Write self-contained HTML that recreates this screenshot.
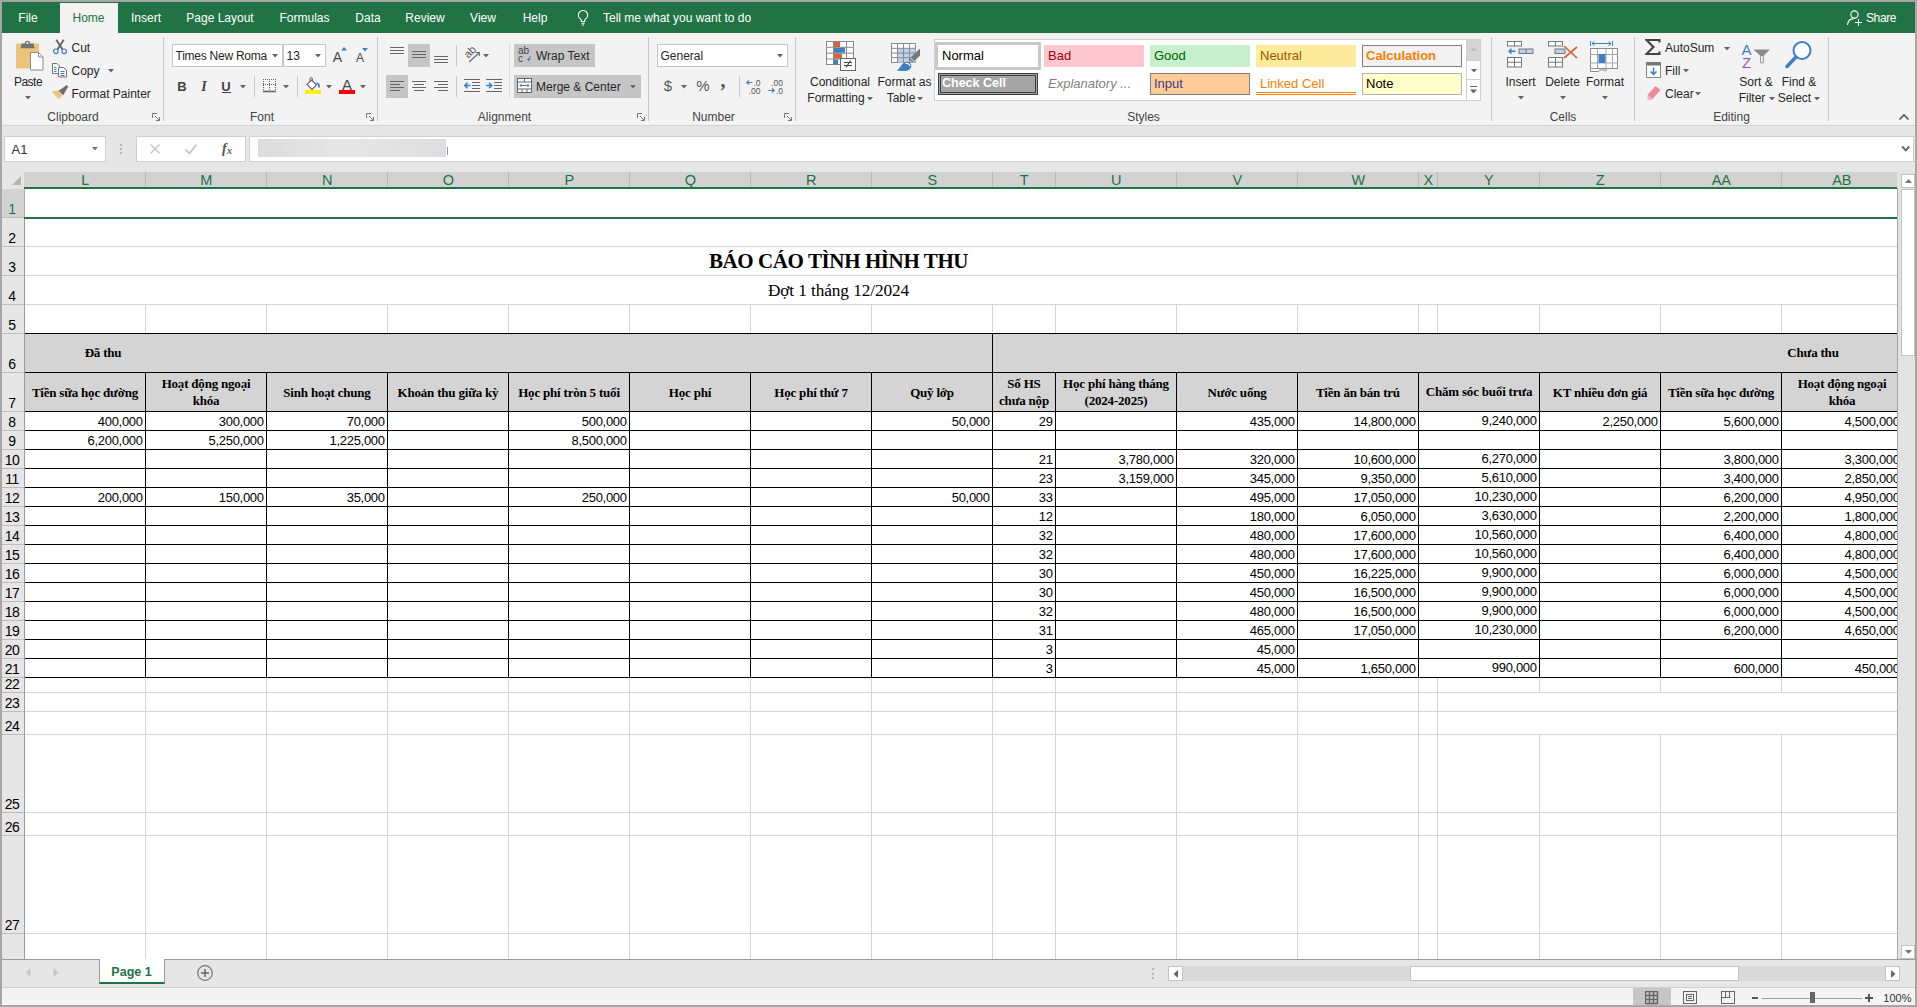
<!DOCTYPE html>
<html><head><meta charset="utf-8"><title>Excel</title>
<style>
html,body{margin:0;padding:0}
body{width:1917px;height:1007px;overflow:hidden;background:#a6a6a6;position:relative;font-family:"Liberation Sans",sans-serif;font-size:12px;color:#262626}
div,span,svg{position:absolute;box-sizing:border-box}
span{white-space:nowrap;line-height:1}
.u{font-size:12px;color:#262626}
.w{font-size:12px;color:#fff}
.gl{font-size:12px;color:#444}
.hd{font-family:"Liberation Serif",serif;font-weight:bold;font-size:13px;letter-spacing:-0.2px;color:#000;text-align:center;white-space:normal;line-height:17px}
.d{font-size:13px;letter-spacing:-0.3px;color:#000}
.rn{font-size:14px;letter-spacing:-0.5px;color:#000}
.cn{font-size:14.5px;color:#217346}
.sep{width:1px;background:#c8c8c8}
</style></head><body>

<div style="left:2px;top:2px;width:1913px;height:31px;background:#217346"></div>
<div style="left:60px;top:3px;width:58px;height:30px;background:#f3f3f3"></div>
<span class="w" style="left:28px;top:17.5px;transform:translate(-50%,-50%);">File</span>
<span class="w" style="left:146px;top:17.5px;transform:translate(-50%,-50%);">Insert</span>
<span class="w" style="left:220px;top:17.5px;transform:translate(-50%,-50%);">Page Layout</span>
<span class="w" style="left:304.5px;top:17.5px;transform:translate(-50%,-50%);">Formulas</span>
<span class="w" style="left:368px;top:17.5px;transform:translate(-50%,-50%);">Data</span>
<span class="w" style="left:425px;top:17.5px;transform:translate(-50%,-50%);">Review</span>
<span class="w" style="left:483px;top:17.5px;transform:translate(-50%,-50%);">View</span>
<span class="w" style="left:535px;top:17.5px;transform:translate(-50%,-50%);">Help</span>
<span class="u" style="left:88.5px;top:17.5px;transform:translate(-50%,-50%);color:#217346">Home</span>
<svg style="left:576px;top:9px" width="14" height="18" viewBox="0 0 14 18"><path d="M7 1.5a4.6 4.6 0 0 0-2.6 8.4c.6.5.9 1.1.9 1.9v.7h3.4v-.7c0-.8.3-1.4.9-1.9A4.6 4.6 0 0 0 7 1.500z" fill="none" stroke="#fff" stroke-width="1.1"/><path d="M5.4 14.3h3.2M5.9 16h2.200" stroke="#fff" stroke-width="1"/></svg>
<span class="w" style="left:603px;top:17.5px;transform:translate(0,-50%);">Tell me what you want to do</span>
<svg style="left:1846px;top:9px" width="18" height="18" viewBox="0 0 18 18"><circle cx="8.5" cy="5.5" r="3.6" fill="none" stroke="#fff" stroke-width="1.1"/><path d="M1.500 16c.4-4 3-6.300 6-6.400" fill="none" stroke="#fff" stroke-width="1.1"/><path d="M12.500 10v7M9 13.500h7" stroke="#fff" stroke-width="1.1"/></svg>
<span class="w" style="left:1866px;top:17.5px;transform:translate(0,-50%);letter-spacing:-0.400px">Share</span>
<div style="left:2px;top:33px;width:1913px;height:92px;background:#f3f3f3"></div>
<div style="left:2px;top:125px;width:1913px;height:1px;background:#d4d4d4"></div>
<div class="sep" style="left:163px;top:37px;width:1px;height:84px;"></div>
<div class="sep" style="left:377px;top:37px;width:1px;height:84px;"></div>
<div class="sep" style="left:648px;top:37px;width:1px;height:84px;"></div>
<div class="sep" style="left:795px;top:37px;width:1px;height:84px;"></div>
<div class="sep" style="left:1491px;top:37px;width:1px;height:84px;"></div>
<div class="sep" style="left:1634px;top:37px;width:1px;height:84px;"></div>
<div class="sep" style="left:1828px;top:37px;width:1px;height:84px;"></div>
<span class="gl" style="left:73px;top:116.5px;transform:translate(-50%,-50%);">Clipboard</span>
<span class="gl" style="left:262px;top:116.5px;transform:translate(-50%,-50%);">Font</span>
<span class="gl" style="left:504.5px;top:116.5px;transform:translate(-50%,-50%);">Alignment</span>
<span class="gl" style="left:713.5px;top:116.5px;transform:translate(-50%,-50%);">Number</span>
<span class="gl" style="left:1143.5px;top:116.5px;transform:translate(-50%,-50%);">Styles</span>
<span class="gl" style="left:1563px;top:116.5px;transform:translate(-50%,-50%);">Cells</span>
<span class="gl" style="left:1731.5px;top:116.5px;transform:translate(-50%,-50%);">Editing</span>
<svg style="left:152px;top:113px" width="8" height="8" viewBox="0 0 8 8"><path d="M.5 5V.500H5" fill="none" stroke="#777" stroke-width="1"/><path d="M3 3l4 4M7.500 4v3.500H4" fill="none" stroke="#777" stroke-width="1"/></svg>
<svg style="left:366px;top:113px" width="8" height="8" viewBox="0 0 8 8"><path d="M.5 5V.500H5" fill="none" stroke="#777" stroke-width="1"/><path d="M3 3l4 4M7.500 4v3.500H4" fill="none" stroke="#777" stroke-width="1"/></svg>
<svg style="left:637px;top:113px" width="8" height="8" viewBox="0 0 8 8"><path d="M.5 5V.500H5" fill="none" stroke="#777" stroke-width="1"/><path d="M3 3l4 4M7.500 4v3.500H4" fill="none" stroke="#777" stroke-width="1"/></svg>
<svg style="left:784px;top:113px" width="8" height="8" viewBox="0 0 8 8"><path d="M.5 5V.500H5" fill="none" stroke="#777" stroke-width="1"/><path d="M3 3l4 4M7.500 4v3.500H4" fill="none" stroke="#777" stroke-width="1"/></svg>
<svg style="left:1898px;top:113px" width="12" height="8" viewBox="0 0 12 8"><path d="M1.500 6.500L6 2l4.500 4.500" fill="none" stroke="#555" stroke-width="1.600"/></svg>
<svg style="left:14px;top:40px" width="32" height="32" viewBox="0 0 32 32"><rect x="2" y="3.500" width="23" height="25" rx="1" fill="#ebc37a"/>
<path d="M7.500 3.500h3.300a2.700 2.700 0 0 1 5.400 0h3.300l1 4.800h-14z" fill="#737373"/><rect x="12.500" y="2.200" width="2" height="1.800" fill="#f3f3f3"/>
<path d="M16.500 12.500h8l4.500 4.500v13h-12.500z" fill="#fff" stroke="#8a8a8a" stroke-width="1"/><path d="M24.500 12.500v4.500h4.500" fill="none" stroke="#8a8a8a" stroke-width="1"/></svg>
<span class="u" style="left:28px;top:82px;transform:translate(-50%,-50%);letter-spacing:-0.500px">Paste</span>
<svg style="left:24.5px;top:95.5px" width="6" height="3.5" viewBox="0 0 6 3.5"><path d="M0 0h6L3 3.500z" fill="#666"/></svg>
<svg style="left:52px;top:39px" width="16" height="16" viewBox="0 0 16 16"><path d="M4.300 .8l6.200 9.700M11.700 .8L5.500 10.500" stroke="#666" stroke-width="1.900" fill="none"/>
<circle cx="3.800" cy="12.300" r="2.300" fill="none" stroke="#3e7fc4" stroke-width="1.200"/><circle cx="12.200" cy="12.300" r="2.300" fill="none" stroke="#3e7fc4" stroke-width="1.200"/></svg>
<span class="u" style="left:71.5px;top:47.5px;transform:translate(0,-50%);">Cut</span>
<svg style="left:51px;top:62px" width="17" height="16" viewBox="0 0 17 16"><path d="M1.500 1.500h4.500l2.500 2.500v7.500h-7z" fill="#fff" stroke="#777" stroke-width="1"/><path d="M3 5.500h2.500M3 7.500h2.500M3 9.500h2.500" stroke="#3e7fc4" stroke-width="1"/>
<path d="M7.500 5.500h5l3 3v6.500h-8z" fill="#fff" stroke="#777" stroke-width="1"/><path d="M9.500 9.500h4M9.500 11.500h4M9.500 13.500h4" stroke="#3e7fc4" stroke-width="1"/></svg>
<span class="u" style="left:71.5px;top:70.5px;transform:translate(0,-50%);">Copy</span>
<svg style="left:108px;top:69.0px" width="6" height="3.5" viewBox="0 0 6 3.5"><path d="M0 0h6L3 3.500z" fill="#666"/></svg>
<svg style="left:51px;top:85px" width="18" height="16" viewBox="0 0 18 16"><path d="M7.500 5.800L13.800 1.500 15.300 0l2 1.800-1.300 1.700-3.700 6.700z" fill="#6d6d6d"/>
<path d="M.8 6.800l6.300-1.700 4.200 5.400-3.500 3.800z" fill="#ebc37a"/></svg>
<span class="u" style="left:71.5px;top:93.5px;transform:translate(0,-50%);">Format Painter</span>
<div style="left:172px;top:44px;width:111px;height:23px;background:#fff;border:1px solid #c6c6c6"></div>
<div style="left:283px;top:44px;width:43px;height:23px;background:#fff;border:1px solid #c6c6c6;border-left:0"></div>
<div style="left:282px;top:45px;width:2px;height:21px;background:#c6c6c6"></div>
<span class="u" style="left:175.5px;top:55.5px;transform:translate(0,-50%);letter-spacing:-0.250px">Times New Roma</span>
<svg style="left:272px;top:54.0px" width="6" height="3.5" viewBox="0 0 6 3.5"><path d="M0 0h6L3 3.500z" fill="#666"/></svg>
<span class="u" style="left:286.5px;top:55.5px;transform:translate(0,-50%);">13</span>
<svg style="left:315px;top:54.0px" width="6" height="3.5" viewBox="0 0 6 3.5"><path d="M0 0h6L3 3.500z" fill="#666"/></svg>
<span class="u" style="left:337.5px;top:57px;transform:translate(-50%,-50%);font-size:14px;color:#484848">A</span>
<svg style="left:341px;top:47px" width="6" height="4" viewBox="0 0 6 4"><path d="M0 3.500L3 0l3 3.500z" fill="#3e7fc4"/></svg>
<span class="u" style="left:360px;top:58px;transform:translate(-50%,-50%);font-size:12px;color:#484848">A</span>
<svg style="left:362px;top:48px" width="6" height="4" viewBox="0 0 6 4"><path d="M0 0h6L3 3.500z" fill="#3e7fc4"/></svg>
<span class="u" style="left:182px;top:86px;transform:translate(-50%,-50%);font-weight:bold;font-size:13px;color:#444">B</span>
<span class="u" style="left:204px;top:86.5px;transform:translate(-50%,-50%);font-style:italic;font-family:&quot;Liberation Serif&quot;,serif;font-weight:bold;font-size:14px;color:#444">I</span>
<span class="u" style="left:226px;top:85.5px;transform:translate(-50%,-50%);font-size:13px;color:#444;font-weight:bold">U</span>
<div style="left:221.5px;top:92px;width:9px;height:1px;background:#444"></div>
<svg style="left:240px;top:85.0px" width="6" height="3.5" viewBox="0 0 6 3.5"><path d="M0 0h6L3 3.500z" fill="#666"/></svg>
<div class="sep" style="left:254px;top:76px;width:1px;height:21px;"></div>
<svg style="left:263px;top:79px" width="14" height="14" viewBox="0 0 14 14"><path d="M0 .5h13M0 5.500h13M.5 0v11M6.500 0v11M12.500 0v11" fill="none" stroke="#666" stroke-width="1" stroke-dasharray="1 1"/><path d="M0 12.500h13" stroke="#666" stroke-width="1.600"/></svg>
<svg style="left:283px;top:85.0px" width="6" height="3.5" viewBox="0 0 6 3.5"><path d="M0 0h6L3 3.500z" fill="#666"/></svg>
<div class="sep" style="left:297px;top:76px;width:1px;height:21px;"></div>
<svg style="left:304px;top:77px" width="18" height="14" viewBox="0 0 18 14"><path d="M7.500 3L12.500 8 8 12.500 3 7.500z" fill="#fff" stroke="#666" stroke-width="1.100"/><path d="M6 4.500V1.800a1.200 1.200 0 0 1 2.400 0V4" fill="none" stroke="#666" stroke-width="1"/>
<path d="M12.500 6c2 .5 3 2 2.300 4.500" fill="none" stroke="#3e7fc4" stroke-width="1.800"/></svg>
<div style="left:305px;top:90px;width:16px;height:4px;background:#ffef00"></div>
<svg style="left:326px;top:85.0px" width="6" height="3.5" viewBox="0 0 6 3.5"><path d="M0 0h6L3 3.500z" fill="#666"/></svg>
<span class="u" style="left:347px;top:83.5px;transform:translate(-50%,-50%);font-size:15px;color:#484848">A</span>
<div style="left:339px;top:90px;width:16px;height:4px;background:#f00"></div>
<svg style="left:360px;top:85.0px" width="6" height="3.5" viewBox="0 0 6 3.5"><path d="M0 0h6L3 3.500z" fill="#666"/></svg>
<svg style="left:390px;top:47px" width="14" height="9" viewBox="0 0 14 9"><rect x="0" y="0" width="14" height="1" fill="#666"/><rect x="0" y="3" width="14" height="1" fill="#666"/><rect x="0" y="6" width="14" height="1" fill="#666"/></svg>
<div style="left:408px;top:44px;width:22px;height:23px;background:#c6c6c6"></div>
<svg style="left:412px;top:51px" width="14" height="9" viewBox="0 0 14 9"><rect x="0" y="0" width="14" height="1" fill="#666"/><rect x="0" y="3" width="14" height="1" fill="#666"/><rect x="0" y="6" width="14" height="1" fill="#666"/></svg>
<svg style="left:434px;top:56px" width="14" height="9" viewBox="0 0 14 9"><rect x="0" y="0" width="14" height="1" fill="#666"/><rect x="0" y="3" width="14" height="1" fill="#666"/><rect x="0" y="6" width="14" height="1" fill="#666"/></svg>
<div class="sep" style="left:456px;top:45px;width:1px;height:21px;"></div>
<svg style="left:463px;top:46px" width="19" height="18" viewBox="0 0 19 18"><path d="M6 16L16 7" stroke="#666" stroke-width="1.100"/><path d="M12.500 6.500l3.800 0 0 3.800" fill="none" stroke="#666" stroke-width="1.100"/></svg>
<span class="u" style="left:469.5px;top:52px;transform:translate(-50%,-50%);font-size:11px;color:#555;transform:translate(-50%,-50%) rotate(-45deg)">ab</span>
<svg style="left:483px;top:54.0px" width="6" height="3.5" viewBox="0 0 6 3.5"><path d="M0 0h6L3 3.500z" fill="#666"/></svg>
<div style="left:509px;top:43px;width:1px;height:55px;background:#dedede"></div>
<div style="left:514px;top:44px;width:81px;height:23px;background:#c6c6c6"></div>
<svg style="left:517px;top:47px" width="15" height="16" viewBox="0 0 15 16"><path d="M10.500 12.500h2.500V9M10.500 12.500l1.500-1.500M10.500 12.500l1.500 1.500" fill="none" stroke="#3e7fc4" stroke-width="1"/></svg>
<span class="u" style="left:518px;top:50.5px;transform:translate(0,-50%);font-size:10px;color:#444">ab</span>
<span class="u" style="left:518px;top:59px;transform:translate(0,-50%);font-size:10px;color:#444">c</span>
<span class="u" style="left:536px;top:55.5px;transform:translate(0,-50%);">Wrap Text</span>
<div style="left:386px;top:75px;width:22px;height:23px;background:#c6c6c6"></div>
<svg style="left:390px;top:81px" width="14" height="12" viewBox="0 0 14 12"><rect x="0" y="0" width="14" height="1" fill="#666"/><rect x="0" y="3" width="10" height="1" fill="#666"/><rect x="0" y="6" width="14" height="1" fill="#666"/><rect x="0" y="9" width="10" height="1" fill="#666"/></svg>
<svg style="left:412px;top:81px" width="14" height="12" viewBox="0 0 14 12"><rect x="0.0" y="0" width="14" height="1" fill="#666"/><rect x="2.0" y="3" width="10" height="1" fill="#666"/><rect x="0.0" y="6" width="14" height="1" fill="#666"/><rect x="2.0" y="9" width="10" height="1" fill="#666"/></svg>
<svg style="left:434px;top:81px" width="14" height="12" viewBox="0 0 14 12"><rect x="0" y="0" width="14" height="1" fill="#666"/><rect x="4" y="3" width="10" height="1" fill="#666"/><rect x="0" y="6" width="14" height="1" fill="#666"/><rect x="4" y="9" width="10" height="1" fill="#666"/></svg>
<div class="sep" style="left:456px;top:76px;width:1px;height:21px;"></div>
<svg style="left:464px;top:79px" width="16" height="14" viewBox="0 0 16 14"><path d="M0 .5h16M8 3.500h8M8 6.500h8M8 9.500h8M0 12.500h16" stroke="#666" stroke-width="1"/><path d="M6.500 6.500H.8M3.500 3.800L.8 6.500l2.700 2.700" fill="none" stroke="#3e7fc4" stroke-width="1.600"/></svg>
<svg style="left:486px;top:79px" width="16" height="14" viewBox="0 0 16 14"><path d="M0 .5h16M8 3.500h8M8 6.500h8M8 9.500h8M0 12.500h16" stroke="#666" stroke-width="1"/><path d="M0 6.500h5.700M3 3.800l2.700 2.700L3 9.200" fill="none" stroke="#3e7fc4" stroke-width="1.600"/></svg>
<div style="left:514px;top:75px;width:127px;height:23px;background:#c6c6c6"></div>
<svg style="left:517px;top:78px" width="15" height="16" viewBox="0 0 15 16"><rect x=".5" y=".5" width="14" height="14" fill="#fff" stroke="#666"/><path d="M.5 4h14M.5 11h14M7.500 .5v3.500M5 11v3.500M10 11v3.500" stroke="#666" stroke-width="1"/><path d="M3 7.500h9M4.500 6L3 7.500 4.500 9M10.500 6L12 7.500 10.500 9" fill="none" stroke="#3e7fc4" stroke-width="1"/></svg>
<span class="u" style="left:536px;top:86.5px;transform:translate(0,-50%);">Merge &amp; Center</span>
<svg style="left:630px;top:85.0px" width="6" height="3.5" viewBox="0 0 6 3.5"><path d="M0 0h6L3 3.500z" fill="#666"/></svg>
<div style="left:657px;top:44px;width:131px;height:23px;background:#fff;border:1px solid #c6c6c6"></div>
<span class="u" style="left:660.5px;top:55.5px;transform:translate(0,-50%);">General</span>
<svg style="left:777px;top:54.0px" width="6" height="3.5" viewBox="0 0 6 3.5"><path d="M0 0h6L3 3.500z" fill="#666"/></svg>
<span class="u" style="left:668px;top:85px;transform:translate(-50%,-50%);font-size:15px;color:#555">$</span>
<svg style="left:681px;top:85.0px" width="6" height="3.5" viewBox="0 0 6 3.5"><path d="M0 0h6L3 3.500z" fill="#666"/></svg>
<span class="u" style="left:703px;top:85px;transform:translate(-50%,-50%);font-size:15px;color:#555">%</span>
<span class="u" style="left:723px;top:80px;transform:translate(-50%,-50%);font-size:20px;font-weight:bold;color:#555;font-family:&quot;Liberation Serif&quot;,serif">,</span>
<div class="sep" style="left:739px;top:76px;width:1px;height:21px;"></div>
<svg style="left:746px;top:79px" width="16" height="15" viewBox="0 0 16 15"><path d="M6.500 3.500H1M3 1.300L.8 3.500 3 5.700" fill="none" stroke="#3e7fc4" stroke-width="1.200"/></svg>
<span class="u" style="left:757px;top:82.5px;transform:translate(-50%,-50%);font-size:8.500px;color:#555">.0</span>
<span class="u" style="left:754.5px;top:90.5px;transform:translate(-50%,-50%);font-size:8.500px;color:#555">.00</span>
<svg style="left:768px;top:79px" width="16" height="15" viewBox="0 0 16 15"><path d="M.5 11.500H6M4 9.300l2.200 2.200L4 13.700" fill="none" stroke="#3e7fc4" stroke-width="1.200"/></svg>
<span class="u" style="left:777px;top:82.5px;transform:translate(-50%,-50%);font-size:8.500px;color:#555">.00</span>
<span class="u" style="left:779.5px;top:90.5px;transform:translate(-50%,-50%);font-size:8.500px;color:#555">.0</span>
<svg style="left:826px;top:41px" width="31" height="30" viewBox="0 0 31 30"><rect x=".5" y=".5" width="27" height="23" fill="#fff" stroke="#8a8a8a"/><path d="M.5 6.300h27M.5 12.200h27M.5 18h27M7.500 .5v23M20.500 .5v23" stroke="#8a8a8a" stroke-width="1"/>
<rect x="8" y="1" width="6" height="5" fill="#d9623b"/><rect x="8" y="6.800" width="11" height="5" fill="#3e7fc4"/><rect x="8" y="12.700" width="8" height="5" fill="#d9623b"/><rect x="8" y="18.500" width="4" height="5" fill="#3e7fc4"/>
<rect x="14.500" y="17.500" width="15" height="12" fill="#fff" stroke="#666"/><path d="M18 21.500h8M18 24.500h8M24.500 19.500l-4.500 7" stroke="#444" stroke-width="1.100"/></svg>
<span class="u" style="left:840px;top:81.5px;transform:translate(-50%,-50%);">Conditional</span>
<span class="u" style="left:836px;top:98px;transform:translate(-50%,-50%);">Formatting</span>
<svg style="left:866.5px;top:96.5px" width="6" height="3.5" viewBox="0 0 6 3.5"><path d="M0 0h6L3 3.500z" fill="#666"/></svg>
<svg style="left:891px;top:43px" width="30" height="28" viewBox="0 0 30 28"><rect x=".5" y=".5" width="24" height="19" fill="#fff" stroke="#8a8a8a"/><rect x="6.500" y="5.300" width="18" height="14.200" fill="#bcd3ee"/><path d="M.5 5.300h24M.5 10h24M.5 14.700h24M6.500 .5v19M12.500 .5v19M18.500 .5v19" stroke="#8a8a8a" stroke-width="1"/>
<path d="M29 5.500v7.200l-7.500 6.700-3.700-3.400z" fill="#777"/><path d="M19.300 14.800l3.600 3.400" stroke="#f3f3f3" stroke-width="1"/><path d="M6 27.700c4-3.700 5-7.700 8.500-8.700 3-1 6 1 5.800 4-.3 3-3.300 5-6.800 5z" fill="#3e7fc4"/><path d="M14.500 20.500c2-.6 4 .5 4.500 2.500" fill="none" stroke="#fff" stroke-width="1.200"/></svg>
<span class="u" style="left:904.5px;top:81.5px;transform:translate(-50%,-50%);">Format as</span>
<span class="u" style="left:901px;top:98px;transform:translate(-50%,-50%);">Table</span>
<svg style="left:917px;top:96.5px" width="6" height="3.5" viewBox="0 0 6 3.5"><path d="M0 0h6L3 3.500z" fill="#666"/></svg>
<div style="left:934px;top:39px;width:547px;height:62px;background:#fff;border:1px solid #d0d0d0"></div>
<div style="left:935px;top:42px;width:106px;height:28px;background:#c8c8c8"></div>
<div style="left:938px;top:45px;width:100px;height:22px;background:#fff"></div>
<span class="u" style="left:942px;top:54.5px;transform:translate(0,-50%);color:#000;font-size:13px">Normal</span>
<div style="left:1044px;top:45px;width:100px;height:22px;background:#ffc7ce"></div>
<span class="u" style="left:1048px;top:54.5px;transform:translate(0,-50%);font-size:13px;color:#9c0006">Bad</span>
<div style="left:1150px;top:45px;width:100px;height:22px;background:#c6efce"></div>
<span class="u" style="left:1154px;top:54.5px;transform:translate(0,-50%);font-size:13px;color:#006100">Good</span>
<div style="left:1256px;top:45px;width:100px;height:22px;background:#ffeb9c"></div>
<span class="u" style="left:1260px;top:54.5px;transform:translate(0,-50%);font-size:13px;color:#9c5700">Neutral</span>
<div style="left:1362px;top:45px;width:100px;height:22px;background:#f2f2f2;border:1px solid #7f7f7f"></div>
<span class="u" style="left:1366px;top:54.5px;transform:translate(0,-50%);font-size:13px;color:#fa7d00;font-weight:bold">Calculation</span>
<div style="left:938px;top:73px;width:100px;height:22px;background:#a5a5a5;border:3px double #3f3f3f"></div>
<span class="u" style="left:942px;top:82.5px;transform:translate(0,-50%);font-size:12.500px;color:#fff;font-weight:bold">Check Cell</span>
<span class="u" style="left:1048px;top:82.5px;transform:translate(0,-50%);font-size:13px;color:#7f7f7f;font-style:italic">Explanatory ...</span>
<div style="left:1150px;top:73px;width:100px;height:22px;background:#fc9;border:1px solid #7f7f7f"></div>
<span class="u" style="left:1154px;top:82.5px;transform:translate(0,-50%);font-size:13px;color:#3f3f76">Input</span>
<span class="u" style="left:1260px;top:82.5px;transform:translate(0,-50%);font-size:13px;color:#fa7d00">Linked Cell</span>
<div style="left:1256px;top:92px;width:100px;height:3px;border-top:1px solid #ff8001;border-bottom:1px solid #ff8001"></div>
<div style="left:1362px;top:73px;width:100px;height:22px;background:#ffc;border:1px solid #b2b2b2"></div>
<span class="u" style="left:1366px;top:82.5px;transform:translate(0,-50%);font-size:13px;color:#000">Note</span>
<div style="left:1466px;top:39px;width:15px;height:62px;background:#fff;border:1px solid #d0d0d0"></div>
<div style="left:1467px;top:40px;width:13px;height:20px;background:#d4d4d4"></div>
<div style="left:1467px;top:60px;width:13px;height:1px;background:#d0d0d0"></div>
<div style="left:1467px;top:79px;width:13px;height:1px;background:#d0d0d0"></div>
<svg style="left:1470px;top:47px" width="7" height="4" viewBox="0 0 7 4"><path d="M0 4h7L3.500 0z" fill="#bdbdbd"/></svg>
<svg style="left:1470.5px;top:69.0px" width="6" height="3.5" viewBox="0 0 6 3.5"><path d="M0 0h6L3 3.500z" fill="#666"/></svg>
<svg style="left:1470px;top:86px" width="7" height="8" viewBox="0 0 7 8"><path d="M0 .5h7" stroke="#666"/><path d="M0 3.500h7L3.500 7.500z" fill="#666"/></svg>
<svg style="left:1507px;top:40px" width="28" height="29" viewBox="0 0 28 29"><rect x=".5" y="1.500" width="14" height="4.500" fill="#fff" stroke="#777"/><path d="M7.500 1.500v4.500" stroke="#777"/>
<rect x="12" y="9" width="14" height="4.500" fill="#bcd3ee" stroke="#777"/><path d="M19 9v4.500" stroke="#777"/>
<path d="M8.500 11.200H2M4.500 8.700L2 11.200l2.500 2.500" fill="none" stroke="#3e7fc4" stroke-width="1.400"/>
<rect x=".5" y="17.500" width="14" height="9.500" fill="#fff" stroke="#777"/><path d="M7.500 17.500v9.500M.5 22.200h14" stroke="#777"/></svg>
<span class="u" style="left:1520.5px;top:82px;transform:translate(-50%,-50%);">Insert</span>
<svg style="left:1517.5px;top:96.0px" width="6" height="3.5" viewBox="0 0 6 3.5"><path d="M0 0h6L3 3.500z" fill="#666"/></svg>
<svg style="left:1548px;top:40px" width="31" height="29" viewBox="0 0 31 29"><rect x=".5" y="1.500" width="14" height="4.500" fill="#fff" stroke="#777"/><path d="M7.500 1.500v4.500" stroke="#777"/>
<rect x="7" y="9" width="10" height="4.500" fill="#bcd3ee" stroke="#777"/>
<rect x=".5" y="17.500" width="14" height="9.500" fill="#fff" stroke="#777"/><path d="M7.500 17.500v9.500M.5 22.200h14" stroke="#777"/>
<path d="M16 6l13 12M29 7L16 18" stroke="#d9623b" stroke-width="1.700" fill="none"/></svg>
<span class="u" style="left:1562.5px;top:82px;transform:translate(-50%,-50%);">Delete</span>
<svg style="left:1559.5px;top:96.0px" width="6" height="3.5" viewBox="0 0 6 3.5"><path d="M0 0h6L3 3.500z" fill="#666"/></svg>
<svg style="left:1589px;top:39px" width="31" height="33" viewBox="0 0 31 33"><path d="M1.500 2v5M23.500 2v5M3 4.500h19M5.500 2.500L3 4.500l2.500 2M19.500 2.500l2.500 2-2.500 2" fill="none" stroke="#3e7fc4" stroke-width="1"/>
<rect x="1.500" y="9.500" width="27" height="20" fill="#fff" stroke="#8a8a8a"/><path d="M1.500 15.500h27M1.500 24h27M8.500 9.500v20M17 9.500v20M23.500 9.500v20" stroke="#a5a5a5"/>
<rect x="9.500" y="15" width="7" height="9" fill="#3e7fc4"/><path d="M1.500 29.500v3h8l1.500-1.500h6.500l-1.500 1.500" fill="#fff" stroke="#8a8a8a"/></svg>
<span class="u" style="left:1605px;top:82px;transform:translate(-50%,-50%);">Format</span>
<svg style="left:1602px;top:96.0px" width="6" height="3.5" viewBox="0 0 6 3.5"><path d="M0 0h6L3 3.500z" fill="#666"/></svg>
<svg style="left:1645px;top:39px" width="17" height="16" viewBox="0 0 17 16"><path d="M14.500 3.500V1H1.500l7 7-7 7h13v-2.500" fill="none" stroke="#444" stroke-width="2.100"/></svg>
<span class="u" style="left:1665px;top:48px;transform:translate(0,-50%);">AutoSum</span>
<svg style="left:1724px;top:46.5px" width="6" height="3.5" viewBox="0 0 6 3.5"><path d="M0 0h6L3 3.500z" fill="#666"/></svg>
<svg style="left:1646px;top:61px" width="16" height="18" viewBox="0 0 16 18"><rect x=".5" y="1.500" width="14" height="15" fill="#fff" stroke="#8a8a8a"/><rect x=".5" y="1" width="14" height="3.500" fill="#777"/><path d="M7.500 6.500v7M4.500 10.500l3 3 3-3" fill="none" stroke="#3e7fc4" stroke-width="1.500"/></svg>
<span class="u" style="left:1665px;top:70.5px;transform:translate(0,-50%);">Fill</span>
<svg style="left:1682.5px;top:69.0px" width="6" height="3.5" viewBox="0 0 6 3.5"><path d="M0 0h6L3 3.500z" fill="#666"/></svg>
<svg style="left:1646px;top:85px" width="16" height="15" viewBox="0 0 16 15"><path d="M9.500 1l5 4-8 9-5-4z" fill="#ee8a9c"/><path d="M1.500 10l5 4-1.500 1h-3.500z" fill="#f5b5c0"/></svg>
<span class="u" style="left:1665px;top:93.5px;transform:translate(0,-50%);">Clear</span>
<svg style="left:1694.5px;top:92.0px" width="6" height="3.5" viewBox="0 0 6 3.5"><path d="M0 0h6L3 3.500z" fill="#666"/></svg>
<span class="u" style="left:1746.5px;top:48.5px;transform:translate(-50%,-50%);font-size:15px;color:#3e7fc4">A</span>
<span class="u" style="left:1746.5px;top:62px;transform:translate(-50%,-50%);font-size:15px;color:#9b59b6">Z</span>
<svg style="left:1753px;top:49px" width="18" height="15" viewBox="0 0 18 15"><path d="M.5 .5h16.500l-6.300 6.300v7.500h-3.500v-7.500z" fill="#8a8a8a"/><rect x="8" y="7" width="1.800" height="6.500" fill="#f3f3f3"/></svg>
<span class="u" style="left:1756px;top:82px;transform:translate(-50%,-50%);">Sort &amp;</span>
<span class="u" style="left:1752px;top:98px;transform:translate(-50%,-50%);">Filter</span>
<svg style="left:1768.5px;top:96.5px" width="6" height="3.5" viewBox="0 0 6 3.5"><path d="M0 0h6L3 3.500z" fill="#666"/></svg>
<svg style="left:1784px;top:40px" width="30" height="30" viewBox="0 0 30 30"><circle cx="18" cy="10.500" r="8.500" fill="#fff" stroke="#3e7fc4" stroke-width="2"/><path d="M12 17l-9 9.500" stroke="#3e7fc4" stroke-width="3.400" stroke-linecap="round"/></svg>
<span class="u" style="left:1799px;top:82px;transform:translate(-50%,-50%);">Find &amp;</span>
<span class="u" style="left:1794.5px;top:98px;transform:translate(-50%,-50%);">Select</span>
<svg style="left:1813.5px;top:96.5px" width="6" height="3.5" viewBox="0 0 6 3.5"><path d="M0 0h6L3 3.500z" fill="#666"/></svg>
<div style="left:2px;top:126px;width:1913px;height:46px;background:#e6e6e6"></div>
<div style="left:4px;top:136px;width:102px;height:26px;background:#fff;border:1px solid #d0d0d0"></div>
<span class="u" style="left:11.5px;top:149px;transform:translate(0,-50%);font-size:13px;color:#333">A1</span>
<svg style="left:92px;top:146.5px" width="6" height="3.5" viewBox="0 0 6 3.5"><path d="M0 0h6L3 3.500z" fill="#777"/></svg>
<div style="left:120px;top:144px;width:2px;height:2px;background:#b5b5b5"></div>
<div style="left:120px;top:148px;width:2px;height:2px;background:#b5b5b5"></div>
<div style="left:120px;top:152px;width:2px;height:2px;background:#b5b5b5"></div>
<div style="left:136px;top:136px;width:110px;height:26px;background:#fff;border:1px solid #d0d0d0"></div>
<svg style="left:149px;top:143px" width="12" height="12" viewBox="0 0 12 12"><path d="M1.500 1.500l9 9M10.500 1.500l-9 9" stroke="#c0c0c0" stroke-width="1.300"/></svg>
<svg style="left:184px;top:143px" width="14" height="12" viewBox="0 0 14 12"><path d="M1.500 6.500l4 4 7-9" fill="none" stroke="#c0c0c0" stroke-width="1.600"/></svg>
<span class="u" style="left:222px;top:148.5px;transform:translate(0,-50%);font-family:&quot;Liberation Serif&quot;,serif;font-style:italic;font-weight:bold;font-size:14px;color:#555">f</span>
<span class="u" style="left:227px;top:151px;transform:translate(0,-50%);font-family:&quot;Liberation Serif&quot;,serif;font-style:italic;font-weight:bold;font-size:10px;color:#555">x</span>
<div style="left:249px;top:136px;width:1665px;height:26px;background:#fff;border:1px solid #d0d0d0"></div>
<div style="left:258px;top:139px;width:188px;height:18px;background:linear-gradient(90deg,#dcdcdc,#e6e6e6 45%,#dedede)"></div>
<svg style="left:1901px;top:145px" width="10" height="8" viewBox="0 0 10 8"><path d="M1.200 1.500l3.500 3.800 3.500-3.800" fill="none" stroke="#666" stroke-width="1.900"/></svg>
<div style="left:447px;top:147px;width:1px;height:8px;background:#7f96d8"></div>
<div style="left:2px;top:172px;width:1895px;height:787px;overflow:hidden;background:#fff">
<div style="left:0px;top:0px;width:1895px;height:15px;background:#d2d2d2"></div>
<div style="left:0px;top:0px;width:22px;height:15px;background:#e6e6e6"></div>
<svg style="left:10px;top:4px" width="9" height="9"><path d="M9 0v9H0z" fill="#b4b4b4"/></svg>
<div style="left:143px;top:0px;width:1px;height:15px;background:#b8b8b8"></div>
<span class="cn" style="left:83.3px;top:7.5px;transform:translate(-50%,-50%)">L</span>
<div style="left:264px;top:0px;width:1px;height:15px;background:#b8b8b8"></div>
<span class="cn" style="left:204.3px;top:7.5px;transform:translate(-50%,-50%)">M</span>
<div style="left:385px;top:0px;width:1px;height:15px;background:#b8b8b8"></div>
<span class="cn" style="left:325.3px;top:7.5px;transform:translate(-50%,-50%)">N</span>
<div style="left:506px;top:0px;width:1px;height:15px;background:#b8b8b8"></div>
<span class="cn" style="left:446.3px;top:7.5px;transform:translate(-50%,-50%)">O</span>
<div style="left:627px;top:0px;width:1px;height:15px;background:#b8b8b8"></div>
<span class="cn" style="left:567.3px;top:7.5px;transform:translate(-50%,-50%)">P</span>
<div style="left:748px;top:0px;width:1px;height:15px;background:#b8b8b8"></div>
<span class="cn" style="left:688.3px;top:7.5px;transform:translate(-50%,-50%)">Q</span>
<div style="left:869px;top:0px;width:1px;height:15px;background:#b8b8b8"></div>
<span class="cn" style="left:809.3px;top:7.5px;transform:translate(-50%,-50%)">R</span>
<div style="left:990px;top:0px;width:1px;height:15px;background:#b8b8b8"></div>
<span class="cn" style="left:930.3px;top:7.5px;transform:translate(-50%,-50%)">S</span>
<div style="left:1053px;top:0px;width:1px;height:15px;background:#b8b8b8"></div>
<span class="cn" style="left:1022.3px;top:7.5px;transform:translate(-50%,-50%)">T</span>
<div style="left:1174px;top:0px;width:1px;height:15px;background:#b8b8b8"></div>
<span class="cn" style="left:1114.3px;top:7.5px;transform:translate(-50%,-50%)">U</span>
<div style="left:1295px;top:0px;width:1px;height:15px;background:#b8b8b8"></div>
<span class="cn" style="left:1235.3px;top:7.5px;transform:translate(-50%,-50%)">V</span>
<div style="left:1416px;top:0px;width:1px;height:15px;background:#b8b8b8"></div>
<span class="cn" style="left:1356.3px;top:7.5px;transform:translate(-50%,-50%)">W</span>
<div style="left:1435px;top:0px;width:1px;height:15px;background:#b8b8b8"></div>
<span class="cn" style="left:1426.3px;top:7.5px;transform:translate(-50%,-50%)">X</span>
<div style="left:1537px;top:0px;width:1px;height:15px;background:#b8b8b8"></div>
<span class="cn" style="left:1486.8px;top:7.5px;transform:translate(-50%,-50%)">Y</span>
<div style="left:1658px;top:0px;width:1px;height:15px;background:#b8b8b8"></div>
<span class="cn" style="left:1598.3px;top:7.5px;transform:translate(-50%,-50%)">Z</span>
<div style="left:1779px;top:0px;width:1px;height:15px;background:#b8b8b8"></div>
<span class="cn" style="left:1719.3px;top:7.5px;transform:translate(-50%,-50%)">AA</span>
<div style="left:1900px;top:0px;width:1px;height:15px;background:#b8b8b8"></div>
<span class="cn" style="left:1839.8px;top:7.5px;transform:translate(-50%,-50%)">AB</span>
<div style="left:22px;top:15px;width:1873px;height:2px;background:#217346"></div>
<div style="left:0px;top:15px;width:22px;height:772px;background:#e6e6e6"></div>
<div style="left:0px;top:17px;width:22px;height:28px;background:#d2d2d2"></div>
<div style="left:22px;top:17px;width:1px;height:770px;background:#9b9b9b"></div>
<div style="left:22px;top:17px;width:1px;height:28px;background:#ababab"></div>
<div style="left:0px;top:45px;width:22px;height:1px;background:#bdbdbd"></div>
<span class="rn" style="left:10px;top:42px;transform:translate(-50%,-100%);color:#217346;line-height:10px;height:10px">1</span>
<div style="left:0px;top:74px;width:22px;height:1px;background:#bdbdbd"></div>
<span class="rn" style="left:10px;top:71px;transform:translate(-50%,-100%);color:#000;line-height:10px;height:10px">2</span>
<div style="left:0px;top:103px;width:22px;height:1px;background:#bdbdbd"></div>
<span class="rn" style="left:10px;top:100px;transform:translate(-50%,-100%);color:#000;line-height:10px;height:10px">3</span>
<div style="left:0px;top:132px;width:22px;height:1px;background:#bdbdbd"></div>
<span class="rn" style="left:10px;top:129px;transform:translate(-50%,-100%);color:#000;line-height:10px;height:10px">4</span>
<div style="left:0px;top:161px;width:22px;height:1px;background:#bdbdbd"></div>
<span class="rn" style="left:10px;top:158px;transform:translate(-50%,-100%);color:#000;line-height:10px;height:10px">5</span>
<div style="left:0px;top:200px;width:22px;height:1px;background:#bdbdbd"></div>
<span class="rn" style="left:10px;top:197px;transform:translate(-50%,-100%);color:#000;line-height:10px;height:10px">6</span>
<div style="left:0px;top:239px;width:22px;height:1px;background:#bdbdbd"></div>
<span class="rn" style="left:10px;top:236px;transform:translate(-50%,-100%);color:#000;line-height:10px;height:10px">7</span>
<div style="left:0px;top:258px;width:22px;height:1px;background:#bdbdbd"></div>
<span class="rn" style="left:10px;top:255px;transform:translate(-50%,-100%);color:#000;line-height:10px;height:10px">8</span>
<div style="left:0px;top:277px;width:22px;height:1px;background:#bdbdbd"></div>
<span class="rn" style="left:10px;top:274px;transform:translate(-50%,-100%);color:#000;line-height:10px;height:10px">9</span>
<div style="left:0px;top:296px;width:22px;height:1px;background:#bdbdbd"></div>
<span class="rn" style="left:10px;top:293px;transform:translate(-50%,-100%);color:#000;line-height:10px;height:10px">10</span>
<div style="left:0px;top:315px;width:22px;height:1px;background:#bdbdbd"></div>
<span class="rn" style="left:10px;top:312px;transform:translate(-50%,-100%);color:#000;line-height:10px;height:10px">11</span>
<div style="left:0px;top:334px;width:22px;height:1px;background:#bdbdbd"></div>
<span class="rn" style="left:10px;top:331px;transform:translate(-50%,-100%);color:#000;line-height:10px;height:10px">12</span>
<div style="left:0px;top:353px;width:22px;height:1px;background:#bdbdbd"></div>
<span class="rn" style="left:10px;top:350px;transform:translate(-50%,-100%);color:#000;line-height:10px;height:10px">13</span>
<div style="left:0px;top:372px;width:22px;height:1px;background:#bdbdbd"></div>
<span class="rn" style="left:10px;top:369px;transform:translate(-50%,-100%);color:#000;line-height:10px;height:10px">14</span>
<div style="left:0px;top:391px;width:22px;height:1px;background:#bdbdbd"></div>
<span class="rn" style="left:10px;top:388px;transform:translate(-50%,-100%);color:#000;line-height:10px;height:10px">15</span>
<div style="left:0px;top:410px;width:22px;height:1px;background:#bdbdbd"></div>
<span class="rn" style="left:10px;top:407px;transform:translate(-50%,-100%);color:#000;line-height:10px;height:10px">16</span>
<div style="left:0px;top:429px;width:22px;height:1px;background:#bdbdbd"></div>
<span class="rn" style="left:10px;top:426px;transform:translate(-50%,-100%);color:#000;line-height:10px;height:10px">17</span>
<div style="left:0px;top:448px;width:22px;height:1px;background:#bdbdbd"></div>
<span class="rn" style="left:10px;top:445px;transform:translate(-50%,-100%);color:#000;line-height:10px;height:10px">18</span>
<div style="left:0px;top:467px;width:22px;height:1px;background:#bdbdbd"></div>
<span class="rn" style="left:10px;top:464px;transform:translate(-50%,-100%);color:#000;line-height:10px;height:10px">19</span>
<div style="left:0px;top:486px;width:22px;height:1px;background:#bdbdbd"></div>
<span class="rn" style="left:10px;top:483px;transform:translate(-50%,-100%);color:#000;line-height:10px;height:10px">20</span>
<div style="left:0px;top:505px;width:22px;height:1px;background:#bdbdbd"></div>
<span class="rn" style="left:10px;top:502px;transform:translate(-50%,-100%);color:#000;line-height:10px;height:10px">21</span>
<div style="left:0px;top:520px;width:22px;height:1px;background:#bdbdbd"></div>
<span class="rn" style="left:10px;top:517px;transform:translate(-50%,-100%);color:#000;line-height:10px;height:10px">22</span>
<div style="left:0px;top:539px;width:22px;height:1px;background:#bdbdbd"></div>
<span class="rn" style="left:10px;top:536px;transform:translate(-50%,-100%);color:#000;line-height:10px;height:10px">23</span>
<div style="left:0px;top:562px;width:22px;height:1px;background:#bdbdbd"></div>
<span class="rn" style="left:10px;top:559px;transform:translate(-50%,-100%);color:#000;line-height:10px;height:10px">24</span>
<div style="left:0px;top:640px;width:22px;height:1px;background:#bdbdbd"></div>
<span class="rn" style="left:10px;top:637px;transform:translate(-50%,-100%);color:#000;line-height:10px;height:10px">25</span>
<div style="left:0px;top:663px;width:22px;height:1px;background:#bdbdbd"></div>
<span class="rn" style="left:10px;top:660px;transform:translate(-50%,-100%);color:#000;line-height:10px;height:10px">26</span>
<div style="left:0px;top:761px;width:22px;height:1px;background:#bdbdbd"></div>
<span class="rn" style="left:10px;top:758px;transform:translate(-50%,-100%);color:#000;line-height:10px;height:10px">27</span>
<div style="left:23px;top:74px;width:1872px;height:1px;background:#d4d4d4"></div>
<div style="left:23px;top:103px;width:1872px;height:1px;background:#d4d4d4"></div>
<div style="left:23px;top:132px;width:1872px;height:1px;background:#d4d4d4"></div>
<div style="left:23px;top:520px;width:1872px;height:1px;background:#d4d4d4"></div>
<div style="left:23px;top:539px;width:1872px;height:1px;background:#d4d4d4"></div>
<div style="left:23px;top:562px;width:1872px;height:1px;background:#d4d4d4"></div>
<div style="left:23px;top:640px;width:1872px;height:1px;background:#d4d4d4"></div>
<div style="left:23px;top:663px;width:1872px;height:1px;background:#d4d4d4"></div>
<div style="left:23px;top:761px;width:1872px;height:1px;background:#d4d4d4"></div>
<div style="left:143px;top:133px;width:1px;height:28px;background:#d4d4d4"></div>
<div style="left:264px;top:133px;width:1px;height:28px;background:#d4d4d4"></div>
<div style="left:385px;top:133px;width:1px;height:28px;background:#d4d4d4"></div>
<div style="left:506px;top:133px;width:1px;height:28px;background:#d4d4d4"></div>
<div style="left:627px;top:133px;width:1px;height:28px;background:#d4d4d4"></div>
<div style="left:748px;top:133px;width:1px;height:28px;background:#d4d4d4"></div>
<div style="left:869px;top:133px;width:1px;height:28px;background:#d4d4d4"></div>
<div style="left:990px;top:133px;width:1px;height:28px;background:#d4d4d4"></div>
<div style="left:1053px;top:133px;width:1px;height:28px;background:#d4d4d4"></div>
<div style="left:1174px;top:133px;width:1px;height:28px;background:#d4d4d4"></div>
<div style="left:1295px;top:133px;width:1px;height:28px;background:#d4d4d4"></div>
<div style="left:1416px;top:133px;width:1px;height:28px;background:#d4d4d4"></div>
<div style="left:1435px;top:133px;width:1px;height:28px;background:#d4d4d4"></div>
<div style="left:1537px;top:133px;width:1px;height:28px;background:#d4d4d4"></div>
<div style="left:1658px;top:133px;width:1px;height:28px;background:#d4d4d4"></div>
<div style="left:1779px;top:133px;width:1px;height:28px;background:#d4d4d4"></div>
<div style="left:1900px;top:133px;width:1px;height:28px;background:#d4d4d4"></div>
<div style="left:143px;top:506px;width:1px;height:14px;background:#d4d4d4"></div>
<div style="left:264px;top:506px;width:1px;height:14px;background:#d4d4d4"></div>
<div style="left:385px;top:506px;width:1px;height:14px;background:#d4d4d4"></div>
<div style="left:506px;top:506px;width:1px;height:14px;background:#d4d4d4"></div>
<div style="left:627px;top:506px;width:1px;height:14px;background:#d4d4d4"></div>
<div style="left:748px;top:506px;width:1px;height:14px;background:#d4d4d4"></div>
<div style="left:869px;top:506px;width:1px;height:14px;background:#d4d4d4"></div>
<div style="left:990px;top:506px;width:1px;height:14px;background:#d4d4d4"></div>
<div style="left:1053px;top:506px;width:1px;height:14px;background:#d4d4d4"></div>
<div style="left:1174px;top:506px;width:1px;height:14px;background:#d4d4d4"></div>
<div style="left:1295px;top:506px;width:1px;height:14px;background:#d4d4d4"></div>
<div style="left:1416px;top:506px;width:1px;height:14px;background:#d4d4d4"></div>
<div style="left:1435px;top:506px;width:1px;height:14px;background:#d4d4d4"></div>
<div style="left:1537px;top:506px;width:1px;height:14px;background:#d4d4d4"></div>
<div style="left:1658px;top:506px;width:1px;height:14px;background:#d4d4d4"></div>
<div style="left:1779px;top:506px;width:1px;height:14px;background:#d4d4d4"></div>
<div style="left:1900px;top:506px;width:1px;height:14px;background:#d4d4d4"></div>
<div style="left:143px;top:521px;width:1px;height:41px;background:#d4d4d4"></div>
<div style="left:264px;top:521px;width:1px;height:41px;background:#d4d4d4"></div>
<div style="left:385px;top:521px;width:1px;height:41px;background:#d4d4d4"></div>
<div style="left:506px;top:521px;width:1px;height:41px;background:#d4d4d4"></div>
<div style="left:627px;top:521px;width:1px;height:41px;background:#d4d4d4"></div>
<div style="left:748px;top:521px;width:1px;height:41px;background:#d4d4d4"></div>
<div style="left:869px;top:521px;width:1px;height:41px;background:#d4d4d4"></div>
<div style="left:990px;top:521px;width:1px;height:41px;background:#d4d4d4"></div>
<div style="left:1053px;top:521px;width:1px;height:41px;background:#d4d4d4"></div>
<div style="left:1174px;top:521px;width:1px;height:41px;background:#d4d4d4"></div>
<div style="left:1295px;top:521px;width:1px;height:41px;background:#d4d4d4"></div>
<div style="left:1416px;top:521px;width:1px;height:41px;background:#d4d4d4"></div>
<div style="left:1435px;top:521px;width:1px;height:41px;background:#d4d4d4"></div>
<div style="left:143px;top:563px;width:1px;height:225px;background:#d4d4d4"></div>
<div style="left:264px;top:563px;width:1px;height:225px;background:#d4d4d4"></div>
<div style="left:385px;top:563px;width:1px;height:225px;background:#d4d4d4"></div>
<div style="left:506px;top:563px;width:1px;height:225px;background:#d4d4d4"></div>
<div style="left:627px;top:563px;width:1px;height:225px;background:#d4d4d4"></div>
<div style="left:748px;top:563px;width:1px;height:225px;background:#d4d4d4"></div>
<div style="left:869px;top:563px;width:1px;height:225px;background:#d4d4d4"></div>
<div style="left:990px;top:563px;width:1px;height:225px;background:#d4d4d4"></div>
<div style="left:1053px;top:563px;width:1px;height:225px;background:#d4d4d4"></div>
<div style="left:1174px;top:563px;width:1px;height:225px;background:#d4d4d4"></div>
<div style="left:1295px;top:563px;width:1px;height:225px;background:#d4d4d4"></div>
<div style="left:1416px;top:563px;width:1px;height:225px;background:#d4d4d4"></div>
<div style="left:1435px;top:563px;width:1px;height:225px;background:#d4d4d4"></div>
<div style="left:1537px;top:563px;width:1px;height:225px;background:#d4d4d4"></div>
<div style="left:1658px;top:563px;width:1px;height:225px;background:#d4d4d4"></div>
<div style="left:1779px;top:563px;width:1px;height:225px;background:#d4d4d4"></div>
<div style="left:1900px;top:563px;width:1px;height:225px;background:#d4d4d4"></div>
<div style="left:22px;top:45px;width:1873px;height:2px;background:#217346"></div>
<div style="left:23px;top:162px;width:1872px;height:77px;background:#d4d4d4"></div>
<div style="left:23px;top:161px;width:1872px;height:1px;background:#000"></div>
<div style="left:23px;top:200px;width:1872px;height:1px;background:#000"></div>
<div style="left:23px;top:239px;width:1872px;height:1px;background:#000"></div>
<div style="left:23px;top:258px;width:1872px;height:1px;background:#000"></div>
<div style="left:23px;top:277px;width:1872px;height:1px;background:#000"></div>
<div style="left:23px;top:296px;width:1872px;height:1px;background:#000"></div>
<div style="left:23px;top:315px;width:1872px;height:1px;background:#000"></div>
<div style="left:23px;top:334px;width:1872px;height:1px;background:#000"></div>
<div style="left:23px;top:353px;width:1872px;height:1px;background:#000"></div>
<div style="left:23px;top:372px;width:1872px;height:1px;background:#000"></div>
<div style="left:23px;top:391px;width:1872px;height:1px;background:#000"></div>
<div style="left:23px;top:410px;width:1872px;height:1px;background:#000"></div>
<div style="left:23px;top:429px;width:1872px;height:1px;background:#000"></div>
<div style="left:23px;top:448px;width:1872px;height:1px;background:#000"></div>
<div style="left:23px;top:467px;width:1872px;height:1px;background:#000"></div>
<div style="left:23px;top:486px;width:1872px;height:1px;background:#000"></div>
<div style="left:23px;top:505px;width:1872px;height:1px;background:#000"></div>
<div style="left:990px;top:161px;width:1px;height:39px;background:#000"></div>
<div style="left:143px;top:200px;width:1px;height:305px;background:#000"></div>
<div style="left:264px;top:200px;width:1px;height:305px;background:#000"></div>
<div style="left:385px;top:200px;width:1px;height:305px;background:#000"></div>
<div style="left:506px;top:200px;width:1px;height:305px;background:#000"></div>
<div style="left:627px;top:200px;width:1px;height:305px;background:#000"></div>
<div style="left:748px;top:200px;width:1px;height:305px;background:#000"></div>
<div style="left:869px;top:200px;width:1px;height:305px;background:#000"></div>
<div style="left:990px;top:200px;width:1px;height:305px;background:#000"></div>
<div style="left:1053px;top:200px;width:1px;height:305px;background:#000"></div>
<div style="left:1174px;top:200px;width:1px;height:305px;background:#000"></div>
<div style="left:1295px;top:200px;width:1px;height:305px;background:#000"></div>
<div style="left:1416px;top:200px;width:1px;height:305px;background:#000"></div>
<div style="left:1537px;top:200px;width:1px;height:305px;background:#000"></div>
<div style="left:1658px;top:200px;width:1px;height:305px;background:#000"></div>
<div style="left:1779px;top:200px;width:1px;height:305px;background:#000"></div>
<div style="left:1900px;top:200px;width:1px;height:305px;background:#000"></div>
<span class="hd" style="left:836.5px;top:89px;transform:translate(-50%,-50%);white-space:nowrap;font-size:21px;letter-spacing:-0.400px;line-height:1">BÁO CÁO TÌNH HÌNH THU</span>
<span class="hd" style="left:836.5px;top:119px;transform:translate(-50%,-50%);white-space:nowrap;font-size:17.300px;font-weight:normal;letter-spacing:-0.100px;line-height:1">Đợt 1 tháng 12/2024</span>
<span class="hd" style="left:101px;top:179.5px;transform:translate(-50%,-50%);white-space:nowrap;">Đã thu</span>
<span class="hd" style="left:1811px;top:179.5px;transform:translate(-50%,-50%);white-space:nowrap;">Chưa thu</span>
<span class="hd" style="left:24.0px;top:219.5px;width:118px;transform:translate(0,-50%);">Tiền sữa học đường</span>
<span class="hd" style="left:145.0px;top:219.5px;width:118px;transform:translate(0,-50%);">Hoạt động ngoại khóa</span>
<span class="hd" style="left:266.0px;top:219.5px;width:118px;transform:translate(0,-50%);">Sinh hoạt chung</span>
<span class="hd" style="left:387.0px;top:219.5px;width:118px;transform:translate(0,-50%);">Khoản thu giữa kỳ</span>
<span class="hd" style="left:508.0px;top:219.5px;width:118px;transform:translate(0,-50%);">Học phí tròn 5 tuổi</span>
<span class="hd" style="left:629.0px;top:219.5px;width:118px;transform:translate(0,-50%);">Học phí</span>
<span class="hd" style="left:750.0px;top:219.5px;width:118px;transform:translate(0,-50%);">Học phí thứ 7</span>
<span class="hd" style="left:871.0px;top:219.5px;width:118px;transform:translate(0,-50%);">Quỹ lớp</span>
<span class="hd" style="left:992.0px;top:219.5px;width:60px;transform:translate(0,-50%);">Số HS chưa nộp</span>
<span class="hd" style="left:1055.0px;top:219.5px;width:118px;transform:translate(0,-50%);">Học phí hàng tháng (2024-2025)</span>
<span class="hd" style="left:1176.0px;top:219.5px;width:118px;transform:translate(0,-50%);">Nước uống</span>
<span class="hd" style="left:1297.0px;top:219.5px;width:118px;transform:translate(0,-50%);">Tiền ăn bán trú</span>
<span class="hd" style="left:1418.0px;top:219px;width:118px;transform:translate(0,-50%);">Chăm sóc buổi trưa</span>
<span class="hd" style="left:1539.0px;top:219.5px;width:118px;transform:translate(0,-50%);">KT nhiều đơn giá</span>
<span class="hd" style="left:1660.0px;top:219.5px;width:118px;transform:translate(0,-50%);">Tiền sữa học đường</span>
<span class="hd" style="left:1781.0px;top:219.5px;width:118px;transform:translate(0,-50%);">Hoạt động ngoại khóa</span>
<span class="d" style="left:140.7px;top:255px;transform:translate(-100%,-100%);line-height:10px;height:10px">400,000</span>
<span class="d" style="left:261.7px;top:255px;transform:translate(-100%,-100%);line-height:10px;height:10px">300,000</span>
<span class="d" style="left:382.7px;top:255px;transform:translate(-100%,-100%);line-height:10px;height:10px">70,000</span>
<span class="d" style="left:624.7px;top:255px;transform:translate(-100%,-100%);line-height:10px;height:10px">500,000</span>
<span class="d" style="left:987.7px;top:255px;transform:translate(-100%,-100%);line-height:10px;height:10px">50,000</span>
<span class="d" style="left:1050.7px;top:255px;transform:translate(-100%,-100%);line-height:10px;height:10px">29</span>
<span class="d" style="left:1292.7px;top:255px;transform:translate(-100%,-100%);line-height:10px;height:10px">435,000</span>
<span class="d" style="left:1413.7px;top:255px;transform:translate(-100%,-100%);line-height:10px;height:10px">14,800,000</span>
<span class="d" style="left:1534.7px;top:253.5px;transform:translate(-100%,-100%);line-height:10px;height:10px">9,240,000</span>
<span class="d" style="left:1655.7px;top:255px;transform:translate(-100%,-100%);line-height:10px;height:10px">2,250,000</span>
<span class="d" style="left:1776.7px;top:255px;transform:translate(-100%,-100%);line-height:10px;height:10px">5,600,000</span>
<span class="d" style="left:1897.7px;top:255px;transform:translate(-100%,-100%);line-height:10px;height:10px">4,500,000</span>
<span class="d" style="left:140.7px;top:274px;transform:translate(-100%,-100%);line-height:10px;height:10px">6,200,000</span>
<span class="d" style="left:261.7px;top:274px;transform:translate(-100%,-100%);line-height:10px;height:10px">5,250,000</span>
<span class="d" style="left:382.7px;top:274px;transform:translate(-100%,-100%);line-height:10px;height:10px">1,225,000</span>
<span class="d" style="left:624.7px;top:274px;transform:translate(-100%,-100%);line-height:10px;height:10px">8,500,000</span>
<span class="d" style="left:1050.7px;top:293px;transform:translate(-100%,-100%);line-height:10px;height:10px">21</span>
<span class="d" style="left:1171.7px;top:293px;transform:translate(-100%,-100%);line-height:10px;height:10px">3,780,000</span>
<span class="d" style="left:1292.7px;top:293px;transform:translate(-100%,-100%);line-height:10px;height:10px">320,000</span>
<span class="d" style="left:1413.7px;top:293px;transform:translate(-100%,-100%);line-height:10px;height:10px">10,600,000</span>
<span class="d" style="left:1534.7px;top:291.5px;transform:translate(-100%,-100%);line-height:10px;height:10px">6,270,000</span>
<span class="d" style="left:1776.7px;top:293px;transform:translate(-100%,-100%);line-height:10px;height:10px">3,800,000</span>
<span class="d" style="left:1897.7px;top:293px;transform:translate(-100%,-100%);line-height:10px;height:10px">3,300,000</span>
<span class="d" style="left:1050.7px;top:312px;transform:translate(-100%,-100%);line-height:10px;height:10px">23</span>
<span class="d" style="left:1171.7px;top:312px;transform:translate(-100%,-100%);line-height:10px;height:10px">3,159,000</span>
<span class="d" style="left:1292.7px;top:312px;transform:translate(-100%,-100%);line-height:10px;height:10px">345,000</span>
<span class="d" style="left:1413.7px;top:312px;transform:translate(-100%,-100%);line-height:10px;height:10px">9,350,000</span>
<span class="d" style="left:1534.7px;top:310.5px;transform:translate(-100%,-100%);line-height:10px;height:10px">5,610,000</span>
<span class="d" style="left:1776.7px;top:312px;transform:translate(-100%,-100%);line-height:10px;height:10px">3,400,000</span>
<span class="d" style="left:1897.7px;top:312px;transform:translate(-100%,-100%);line-height:10px;height:10px">2,850,000</span>
<span class="d" style="left:140.7px;top:331px;transform:translate(-100%,-100%);line-height:10px;height:10px">200,000</span>
<span class="d" style="left:261.7px;top:331px;transform:translate(-100%,-100%);line-height:10px;height:10px">150,000</span>
<span class="d" style="left:382.7px;top:331px;transform:translate(-100%,-100%);line-height:10px;height:10px">35,000</span>
<span class="d" style="left:624.7px;top:331px;transform:translate(-100%,-100%);line-height:10px;height:10px">250,000</span>
<span class="d" style="left:987.7px;top:331px;transform:translate(-100%,-100%);line-height:10px;height:10px">50,000</span>
<span class="d" style="left:1050.7px;top:331px;transform:translate(-100%,-100%);line-height:10px;height:10px">33</span>
<span class="d" style="left:1292.7px;top:331px;transform:translate(-100%,-100%);line-height:10px;height:10px">495,000</span>
<span class="d" style="left:1413.7px;top:331px;transform:translate(-100%,-100%);line-height:10px;height:10px">17,050,000</span>
<span class="d" style="left:1534.7px;top:329.5px;transform:translate(-100%,-100%);line-height:10px;height:10px">10,230,000</span>
<span class="d" style="left:1776.7px;top:331px;transform:translate(-100%,-100%);line-height:10px;height:10px">6,200,000</span>
<span class="d" style="left:1897.7px;top:331px;transform:translate(-100%,-100%);line-height:10px;height:10px">4,950,000</span>
<span class="d" style="left:1050.7px;top:350px;transform:translate(-100%,-100%);line-height:10px;height:10px">12</span>
<span class="d" style="left:1292.7px;top:350px;transform:translate(-100%,-100%);line-height:10px;height:10px">180,000</span>
<span class="d" style="left:1413.7px;top:350px;transform:translate(-100%,-100%);line-height:10px;height:10px">6,050,000</span>
<span class="d" style="left:1534.7px;top:348.5px;transform:translate(-100%,-100%);line-height:10px;height:10px">3,630,000</span>
<span class="d" style="left:1776.7px;top:350px;transform:translate(-100%,-100%);line-height:10px;height:10px">2,200,000</span>
<span class="d" style="left:1897.7px;top:350px;transform:translate(-100%,-100%);line-height:10px;height:10px">1,800,000</span>
<span class="d" style="left:1050.7px;top:369px;transform:translate(-100%,-100%);line-height:10px;height:10px">32</span>
<span class="d" style="left:1292.7px;top:369px;transform:translate(-100%,-100%);line-height:10px;height:10px">480,000</span>
<span class="d" style="left:1413.7px;top:369px;transform:translate(-100%,-100%);line-height:10px;height:10px">17,600,000</span>
<span class="d" style="left:1534.7px;top:367.5px;transform:translate(-100%,-100%);line-height:10px;height:10px">10,560,000</span>
<span class="d" style="left:1776.7px;top:369px;transform:translate(-100%,-100%);line-height:10px;height:10px">6,400,000</span>
<span class="d" style="left:1897.7px;top:369px;transform:translate(-100%,-100%);line-height:10px;height:10px">4,800,000</span>
<span class="d" style="left:1050.7px;top:388px;transform:translate(-100%,-100%);line-height:10px;height:10px">32</span>
<span class="d" style="left:1292.7px;top:388px;transform:translate(-100%,-100%);line-height:10px;height:10px">480,000</span>
<span class="d" style="left:1413.7px;top:388px;transform:translate(-100%,-100%);line-height:10px;height:10px">17,600,000</span>
<span class="d" style="left:1534.7px;top:386.5px;transform:translate(-100%,-100%);line-height:10px;height:10px">10,560,000</span>
<span class="d" style="left:1776.7px;top:388px;transform:translate(-100%,-100%);line-height:10px;height:10px">6,400,000</span>
<span class="d" style="left:1897.7px;top:388px;transform:translate(-100%,-100%);line-height:10px;height:10px">4,800,000</span>
<span class="d" style="left:1050.7px;top:407px;transform:translate(-100%,-100%);line-height:10px;height:10px">30</span>
<span class="d" style="left:1292.7px;top:407px;transform:translate(-100%,-100%);line-height:10px;height:10px">450,000</span>
<span class="d" style="left:1413.7px;top:407px;transform:translate(-100%,-100%);line-height:10px;height:10px">16,225,000</span>
<span class="d" style="left:1534.7px;top:405.5px;transform:translate(-100%,-100%);line-height:10px;height:10px">9,900,000</span>
<span class="d" style="left:1776.7px;top:407px;transform:translate(-100%,-100%);line-height:10px;height:10px">6,000,000</span>
<span class="d" style="left:1897.7px;top:407px;transform:translate(-100%,-100%);line-height:10px;height:10px">4,500,000</span>
<span class="d" style="left:1050.7px;top:426px;transform:translate(-100%,-100%);line-height:10px;height:10px">30</span>
<span class="d" style="left:1292.7px;top:426px;transform:translate(-100%,-100%);line-height:10px;height:10px">450,000</span>
<span class="d" style="left:1413.7px;top:426px;transform:translate(-100%,-100%);line-height:10px;height:10px">16,500,000</span>
<span class="d" style="left:1534.7px;top:424.5px;transform:translate(-100%,-100%);line-height:10px;height:10px">9,900,000</span>
<span class="d" style="left:1776.7px;top:426px;transform:translate(-100%,-100%);line-height:10px;height:10px">6,000,000</span>
<span class="d" style="left:1897.7px;top:426px;transform:translate(-100%,-100%);line-height:10px;height:10px">4,500,000</span>
<span class="d" style="left:1050.7px;top:445px;transform:translate(-100%,-100%);line-height:10px;height:10px">32</span>
<span class="d" style="left:1292.7px;top:445px;transform:translate(-100%,-100%);line-height:10px;height:10px">480,000</span>
<span class="d" style="left:1413.7px;top:445px;transform:translate(-100%,-100%);line-height:10px;height:10px">16,500,000</span>
<span class="d" style="left:1534.7px;top:443.5px;transform:translate(-100%,-100%);line-height:10px;height:10px">9,900,000</span>
<span class="d" style="left:1776.7px;top:445px;transform:translate(-100%,-100%);line-height:10px;height:10px">6,000,000</span>
<span class="d" style="left:1897.7px;top:445px;transform:translate(-100%,-100%);line-height:10px;height:10px">4,500,000</span>
<span class="d" style="left:1050.7px;top:464px;transform:translate(-100%,-100%);line-height:10px;height:10px">31</span>
<span class="d" style="left:1292.7px;top:464px;transform:translate(-100%,-100%);line-height:10px;height:10px">465,000</span>
<span class="d" style="left:1413.7px;top:464px;transform:translate(-100%,-100%);line-height:10px;height:10px">17,050,000</span>
<span class="d" style="left:1534.7px;top:462.5px;transform:translate(-100%,-100%);line-height:10px;height:10px">10,230,000</span>
<span class="d" style="left:1776.7px;top:464px;transform:translate(-100%,-100%);line-height:10px;height:10px">6,200,000</span>
<span class="d" style="left:1897.7px;top:464px;transform:translate(-100%,-100%);line-height:10px;height:10px">4,650,000</span>
<span class="d" style="left:1050.7px;top:483px;transform:translate(-100%,-100%);line-height:10px;height:10px">3</span>
<span class="d" style="left:1292.7px;top:483px;transform:translate(-100%,-100%);line-height:10px;height:10px">45,000</span>
<span class="d" style="left:1050.7px;top:502px;transform:translate(-100%,-100%);line-height:10px;height:10px">3</span>
<span class="d" style="left:1292.7px;top:502px;transform:translate(-100%,-100%);line-height:10px;height:10px">45,000</span>
<span class="d" style="left:1413.7px;top:502px;transform:translate(-100%,-100%);line-height:10px;height:10px">1,650,000</span>
<span class="d" style="left:1534.7px;top:500.5px;transform:translate(-100%,-100%);line-height:10px;height:10px">990,000</span>
<span class="d" style="left:1776.7px;top:502px;transform:translate(-100%,-100%);line-height:10px;height:10px">600,000</span>
<span class="d" style="left:1897.7px;top:502px;transform:translate(-100%,-100%);line-height:10px;height:10px">450,000</span>
</div>
<div style="left:1897px;top:172px;width:18px;height:787px;background:#e3e3e3"></div>
<div style="left:1897px;top:188px;width:1px;height:771px;background:#a6a6a6"></div>
<div style="left:1901px;top:174px;width:14px;height:14px;background:#fff;border:1px solid #c2c2c2"></div>
<svg style="left:1904.5px;top:179px" width="7" height="4" viewBox="0 0 7 4"><path d="M0 4h7L3.500 0z" fill="#777"/></svg>
<div style="left:1901px;top:189px;width:14px;height:167px;background:#fff;border:1px solid #c2c2c2"></div>
<div style="left:1901px;top:945px;width:14px;height:14px;background:#fff;border:1px solid #c2c2c2"></div>
<svg style="left:1904.5px;top:950px" width="7" height="4" viewBox="0 0 7 4"><path d="M0 0h7L3.500 4z" fill="#777"/></svg>
<div style="left:2px;top:959px;width:1913px;height:28px;background:#e6e6e6"></div>
<div style="left:2px;top:959px;width:1913px;height:1px;background:#9b9b9b"></div>
<div style="left:99px;top:959px;width:66px;height:25px;background:#fff;border-left:1px solid #9b9b9b;border-right:1px solid #9b9b9b;border-bottom:2px solid #217346"></div>
<span class="u" style="left:131.5px;top:972px;transform:translate(-50%,-50%);color:#217346;font-weight:bold;font-size:12.500px">Page 1</span>
<svg style="left:25px;top:968px" width="6" height="9" viewBox="0 0 6 9"><path d="M5.500 0v9L.5 4.500z" fill="#c6c6c6"/></svg>
<svg style="left:53px;top:968px" width="6" height="9" viewBox="0 0 6 9"><path d="M.5 0v9l5-4.500z" fill="#c6c6c6"/></svg>
<svg style="left:196px;top:964px" width="18" height="18" viewBox="0 0 18 18"><circle cx="9" cy="9" r="7.300" fill="none" stroke="#777" stroke-width="1.200"/><path d="M9 5v8M5 9h8" stroke="#666" stroke-width="1.500"/></svg>
<div style="left:1151.5px;top:968px;width:2px;height:2px;background:#b5b5b5"></div>
<div style="left:1151.5px;top:972.5px;width:2px;height:2px;background:#b5b5b5"></div>
<div style="left:1151.5px;top:977px;width:2px;height:2px;background:#b5b5b5"></div>
<div style="left:1168px;top:966px;width:731px;height:15px;background:#dadada"></div>
<div style="left:1168px;top:966px;width:15px;height:15px;background:#fff;border:1px solid #c2c2c2"></div>
<svg style="left:1173px;top:969.5px" width="5" height="8" viewBox="0 0 5 8"><path d="M5 0v8L.5 4z" fill="#666"/></svg>
<div style="left:1885px;top:966px;width:15px;height:15px;background:#fff;border:1px solid #c2c2c2"></div>
<svg style="left:1890.5px;top:969.5px" width="5" height="8" viewBox="0 0 5 8"><path d="M0 0v8l4.500-4z" fill="#666"/></svg>
<div style="left:1410px;top:966px;width:329px;height:15px;background:#fff;border:1px solid #c2c2c2"></div>
<div style="left:2px;top:987px;width:1913px;height:18px;background:#f3f3f3"></div>
<div style="left:2px;top:987px;width:1913px;height:1px;background:#cfcfcf"></div>
<div style="left:1633px;top:988px;width:38px;height:17px;background:#c6c6c6"></div>
<svg style="left:1645px;top:991px" width="14" height="14" viewBox="0 0 14 14"><path d="M.5 .5h12v12H.5zM4.500 .5v12M8.500 .5v12M.5 4.500h12M.5 8.500h12" fill="none" stroke="#666" stroke-width="1.400"/></svg>
<svg style="left:1683px;top:991px" width="15" height="14" viewBox="0 0 15 14"><rect x=".5" y=".5" width="13" height="12" fill="none" stroke="#666"/><rect x="3.500" y="3.500" width="7" height="6" fill="none" stroke="#666"/><path d="M5 5.500h4M5 7.500h4" stroke="#666"/></svg>
<svg style="left:1721px;top:991px" width="15" height="14" viewBox="0 0 15 14"><rect x=".5" y=".5" width="13" height="12" fill="none" stroke="#666"/><path d="M4.500 .5v6M8.500 .5v6M.5 6.500h9" fill="none" stroke="#666"/></svg>
<div style="left:1752px;top:997px;width:6px;height:2px;background:#555"></div>
<div style="left:1762px;top:998px;width:100px;height:1px;background:#a0a0a0"></div>
<div style="left:1810px;top:992px;width:5px;height:11px;background:#666"></div>
<div style="left:1865px;top:997px;width:8px;height:2px;background:#555"></div>
<div style="left:1868px;top:994px;width:2px;height:8px;background:#555"></div>
<span class="u" style="left:1911.5px;top:997.5px;transform:translate(-100%,-50%);font-size:11px;color:#333">100%</span>
</body></html>
